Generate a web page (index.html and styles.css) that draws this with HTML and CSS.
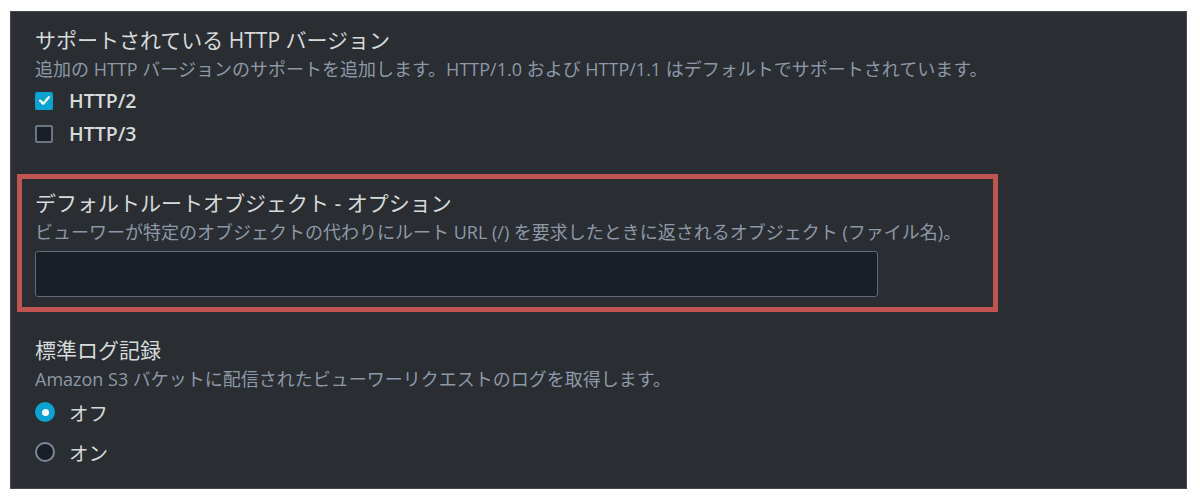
FILE: index.html
```html
<!DOCTYPE html>
<html lang="ja">
<head>
<meta charset="utf-8">
<title>Settings</title>
<link rel="stylesheet" href="styles.css">
</head>
<body>
<div class="panel">
  <section class="field field-first">
    <div class="title">サポートされている HTTP バージョン</div>
    <div class="desc">追加の HTTP バージョンのサポートを追加します。HTTP/1.0 および HTTP/1.1 はデフォルトでサポートされています。</div>
    <div class="options options-check">
      <label class="opt">
        <span class="box box-on">
          <svg width="13" height="13" viewBox="0 0 12 12"><path d="M2 6.2 L4.8 9 L10 3" fill="none" stroke="#fff" stroke-width="2.2" stroke-linecap="round" stroke-linejoin="round"/></svg>
        </span>
        <span class="opt-text bold">HTTP/2</span>
      </label>
      <label class="opt">
        <span class="box"></span>
        <span class="opt-text bold">HTTP/3</span>
      </label>
    </div>
  </section>

  <section class="field field-marked">
    <div class="title">デフォルトルートオブジェクト - オプション</div>
    <div class="desc">ビューワーが特定のオブジェクトの代わりにルート URL (/) を要求したときに返されるオブジェクト (ファイル名)。</div>
    <div class="input"></div>
  </section>

  <section class="field field-last">
    <div class="title">標準ログ記録</div>
    <div class="desc">Amazon S3 バケットに配信されたビューワーリクエストのログを取得します。</div>
    <div class="options options-radio">
      <label class="opt opt-radio">
        <span class="radio radio-on"><span class="dot"></span></span>
        <span class="opt-text">オフ</span>
      </label>
      <label class="opt opt-radio">
        <span class="radio"></span>
        <span class="opt-text">オン</span>
      </label>
    </div>
  </section>
</div>
</body>
</html>
```

FILE: styles.css
```css
html, body {
  margin: 0;
  padding: 0;
  background: #ffffff;
}

body {
  font-family: "Open Sans", "Noto Sans CJK JP", sans-serif;
  padding: 11px 0 0 10px;
}

.panel {
  box-sizing: border-box;
  width: 1177px;
  height: 478px;
  background: #2a2d32;
  border: 1px solid #474c54;
  padding: 14px 0 0 24px;
}

.title {
  font-size: 21px;
  line-height: 28px;
  color: #d5dbdb;
  white-space: nowrap;
}

.desc {
  margin-top: 2px;
  font-size: 18px;
  line-height: 26px;
  color: #8d99a8;
  white-space: nowrap;
}

.options-check {
  margin-top: 2px;
  display: flex;
  flex-direction: column;
}

.opt {
  display: flex;
  align-items: center;
  height: 33px;
  gap: 16px;
}

.opt-radio {
  height: 40px;
  gap: 14px;
}

.opt-text {
  font-size: 19.5px;
  color: #d5dbdb;
}

.bold {
  font-weight: 600;
}

.box {
  box-sizing: border-box;
  width: 18px;
  height: 18px;
  border-radius: 2px;
  border: 2px solid #6b7584;
  background: #1a1f27;
  display: flex;
  align-items: center;
  justify-content: center;
}

.box-on {
  border-color: #0aa3d3;
  background: #0aa3d3;
}

.field-marked {
  margin: 24px 0 0 -18px;
  width: 981px;
  box-sizing: border-box;
  border: 5px solid #bf5450;
  padding: 10px 0 10px 13px;
}

.input {
  margin-top: 6px;
  box-sizing: border-box;
  width: 843px;
  height: 46px;
  background: #1a1f27;
  border: 1px solid #5f6b7a;
  border-radius: 3px;
}

.field-last {
  margin-top: 24px;
}

.options-radio {
  display: flex;
  flex-direction: column;
}

.radio {
  box-sizing: border-box;
  width: 20px;
  height: 20px;
  border-radius: 50%;
  border: 2px solid #7d8998;
  background: #1a1f27;
  display: flex;
  align-items: center;
  justify-content: center;
}

.radio-on {
  border: none;
  background: #0aa3d3;
}

.dot {
  width: 7px;
  height: 7px;
  border-radius: 50%;
  background: #ffffff;
}
```
